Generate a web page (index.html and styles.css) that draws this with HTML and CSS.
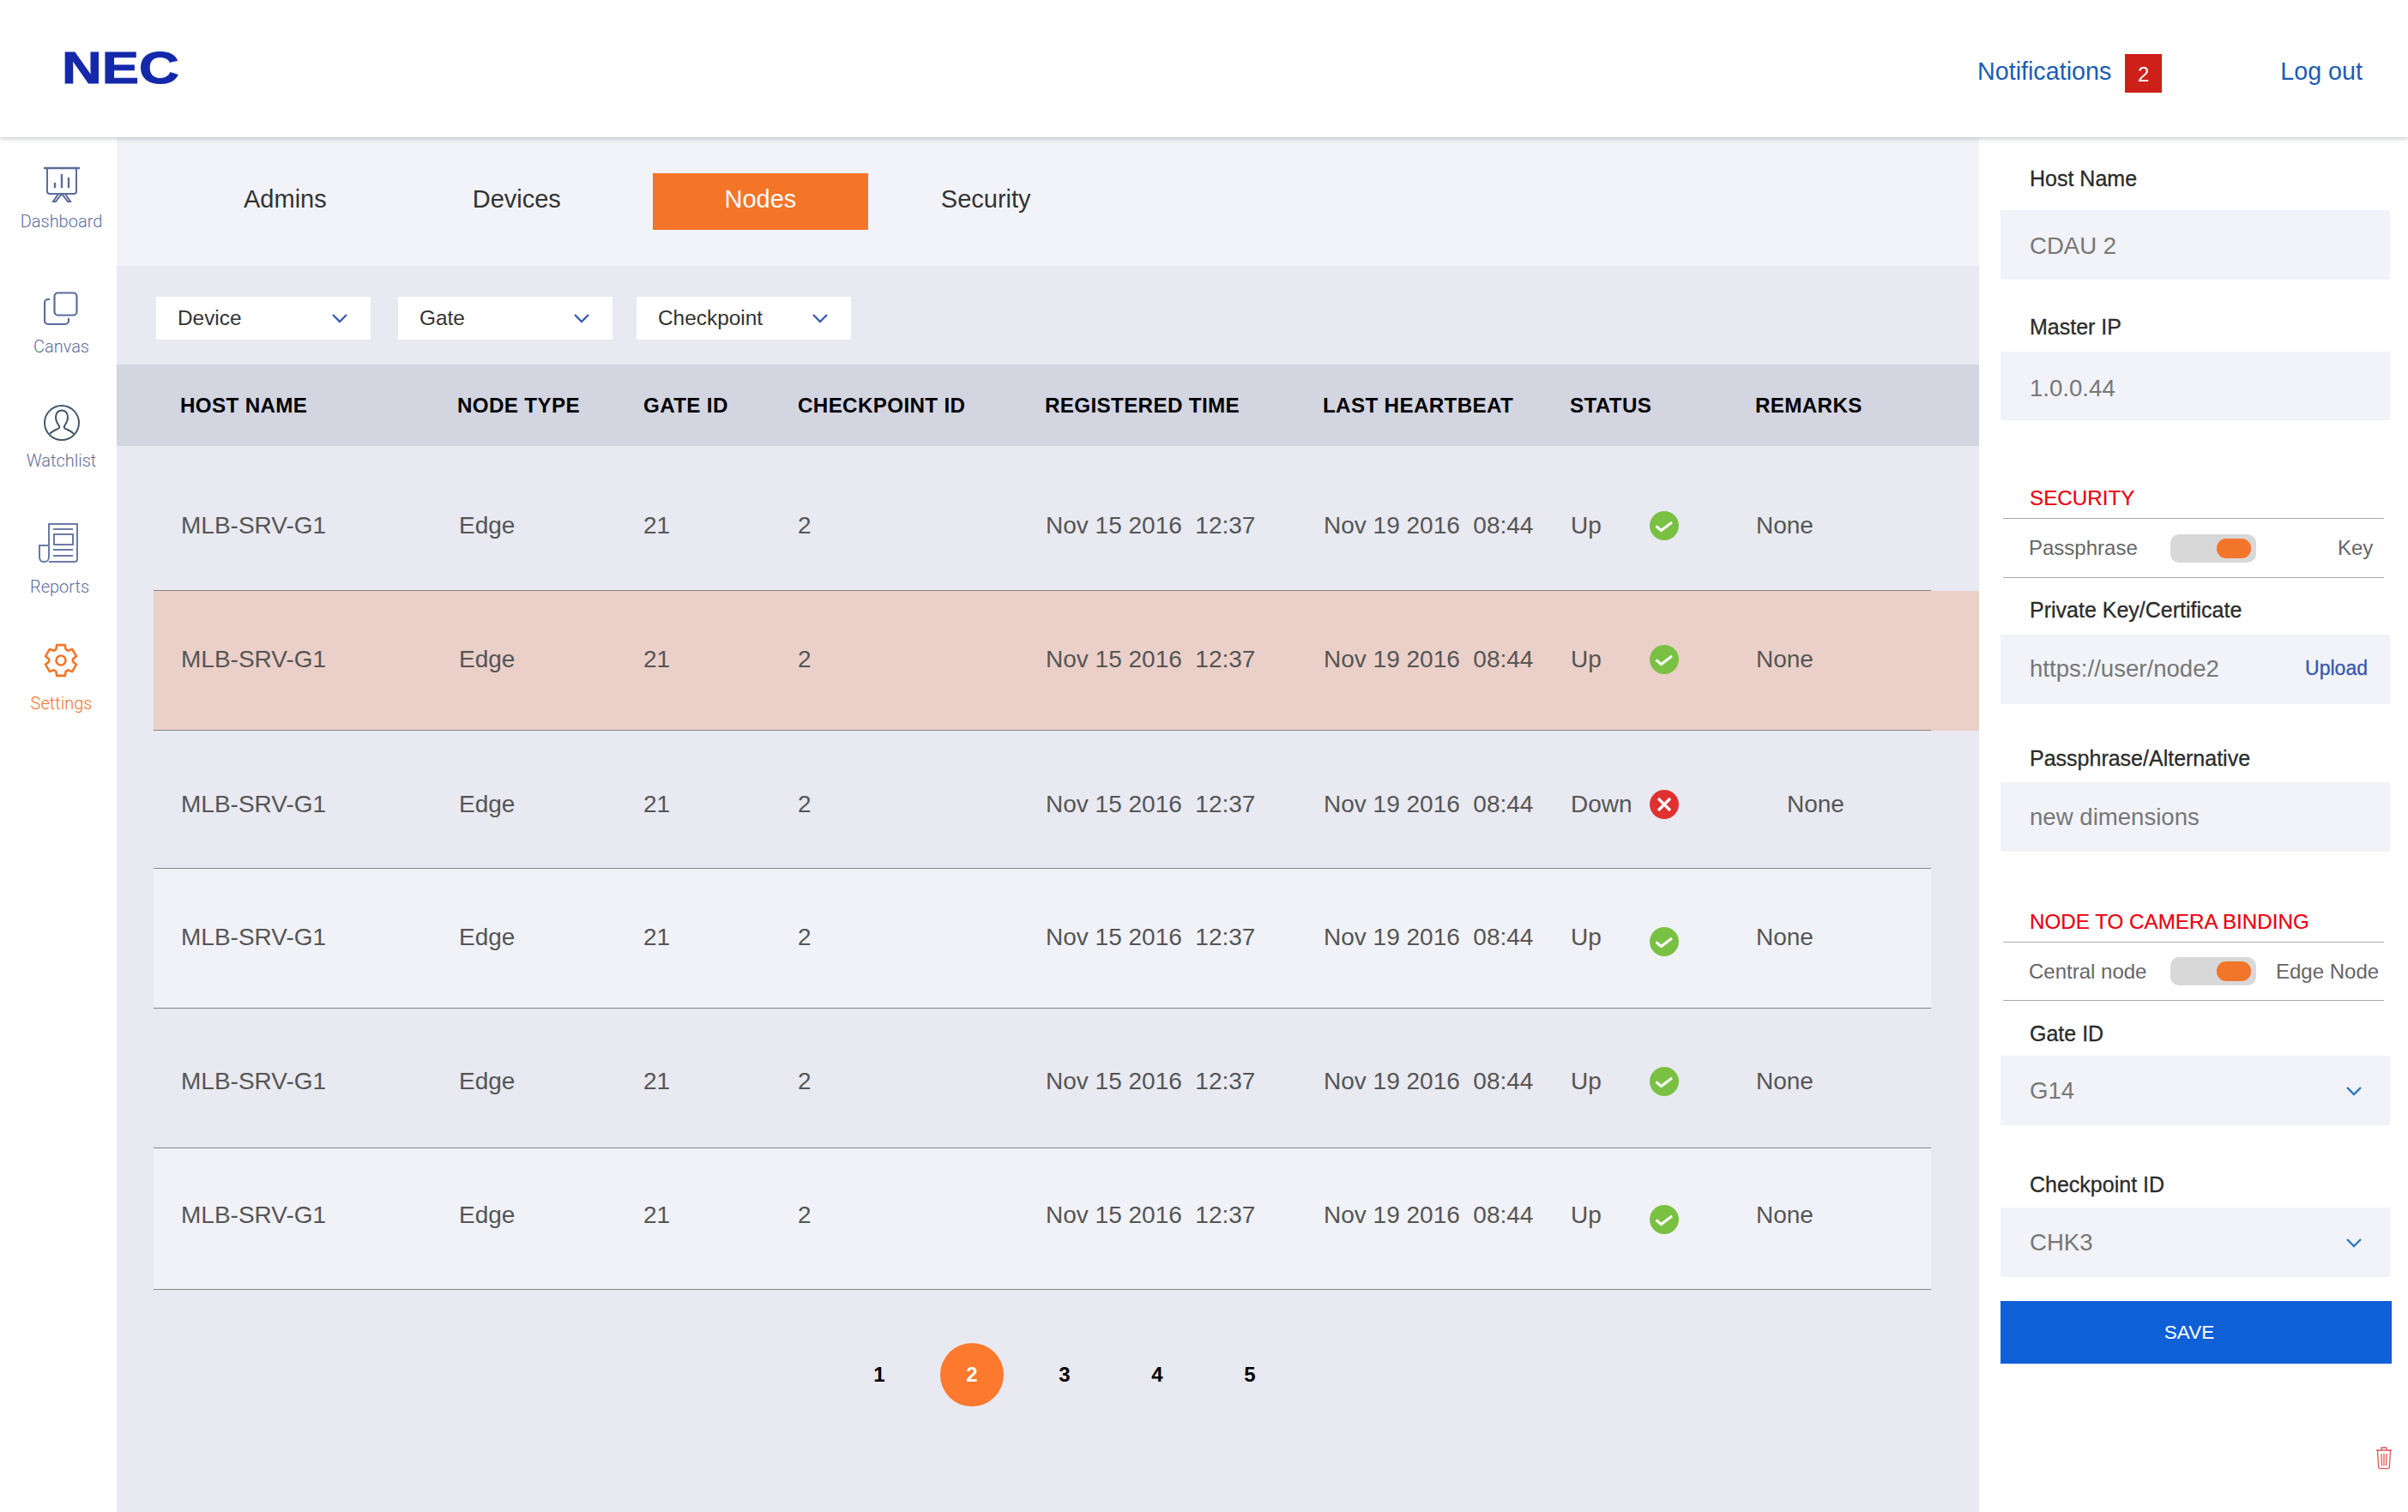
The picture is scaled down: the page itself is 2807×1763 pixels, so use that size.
FILE: index.html
```html
<!DOCTYPE html>
<html lang="en">
  <head>
    <meta charset="UTF-8" />
    <meta name="viewport" content="width=device-width, initial-scale=1.0" />
    <title>Nodes</title>
    <link rel="stylesheet" href="styles.css">
  </head>
  <body>
    <svg class="sprite" aria-hidden="true">
      <symbol id="icon-up" viewBox="0 0 34 34">
        <circle cx="17" cy="17" r="17" fill="#7ac143" />
        <path d="M7.5 17.5l6 5 12.5-9.5" fill="none" stroke="#fff" stroke-width="3" />
      </symbol>
      <symbol id="icon-down" viewBox="0 0 34 34">
        <circle cx="17" cy="17" r="17" fill="#e03131" />
        <path d="M10 10l14 14M24 10l-14 14" fill="none" stroke="#fff" stroke-width="3.2" />
      </symbol>
      <symbol id="icon-chevron" viewBox="0 0 18 12">
        <path d="M1 2l8 8 8-8" fill="none" stroke="currentColor" stroke-width="2.4" />
      </symbol>
    </svg>

    <header class="topbar">
      <span class="logo">NEC</span>
      <nav class="topbar-links">
        <a class="top-link">Notifications</a>
        <span class="badge">2</span>
        <a class="top-link logout">Log out</a>
      </nav>
    </header>

    <div class="app">
      <aside class="sidebar">
        <div class="nav-item nav-dashboard">
          <svg width="42" height="42" viewBox="0 0 42 42" fill="none" stroke="#5b6c9b" stroke-width="2">
            <path d="M0 2h42" stroke-width="2.5" />
            <path d="M4 2v27a3 3 0 0 0 3 3h28a3 3 0 0 0 3-3V2" />
            <path d="M13 19v6M21 9v16M29 13v12" stroke-width="2.4" />
            <path d="M17 32l-6 9h3l7-9 7 9h3l-6-9" />
          </svg>
          <span>Dashboard</span>
        </div>
        <div class="nav-item nav-canvas">
          <svg width="40" height="40" viewBox="0 0 40 40" fill="none" stroke="#5b6c9b" stroke-width="2.2">
            <rect x="12.5" y="1.5" width="26" height="26" rx="4" />
            <path d="M7 10H5a4 4 0 0 0-4 4v21a4 4 0 0 0 4 4h20a4 4 0 0 0 4-4v-3" transform="translate(0 -1)" />
          </svg>
          <span>Canvas</span>
        </div>
        <div class="nav-item nav-watchlist">
          <svg width="42" height="42" viewBox="0 0 42 42" fill="none" stroke="#44586a" stroke-width="2">
            <circle cx="21" cy="21" r="20" />
            <path d="M7 34c3-4 8-5 10.5-6.5 1-1 .5-3-.5-4.5-2-2.5-3-6-3-9 0-4.5 3-7.5 7-7.5s7 3 7 7.5c0 3-1 6.5-3 9-1 1.5-1.5 3.5-.5 4.5 2.5 1.5 7.5 2.5 10.5 6.5" />
          </svg>
          <span>Watchlist</span>
        </div>
        <div class="nav-item nav-reports">
          <svg width="46" height="46" viewBox="0 0 46 46" fill="none" stroke="#6b7aa8" stroke-width="2">
            <path d="M12 45h30a3 3 0 0 0 3-3V1H12v39a5 5 0 0 1-5 5 5 5 0 0 1-6-5V26h11" />
            <path d="M17 7h23M17 31h23M17 38h23" />
            <rect x="18" y="13" width="22" height="12" />
          </svg>
          <span>Reports</span>
        </div>
        <div class="nav-item nav-settings is-active">
          <svg width="40" height="40" viewBox="0 0 40 40" fill="none" stroke="#f47528" stroke-width="2.6" stroke-linejoin="round">
            <path d="M15.2 2.1L24.8 2.1L25.7 7.2L28.2 8.7L33.1 6.9L37.9 15.2L33.9 18.5L33.9 21.5L37.9 24.8L33.1 33.1L28.2 31.3L25.7 32.8L24.8 37.9L15.2 37.9L14.3 32.8L11.8 31.3L6.9 33.1L2.1 24.8L6.1 21.5L6.1 18.5L2.1 15.2L6.9 6.9L11.8 8.7L14.3 7.2Z" />
            <circle cx="20" cy="20" r="5.5" />
          </svg>
          <span>Settings</span>
        </div>
      </aside>

      <main class="content">
        <div class="tabs">
          <a class="tab">Admins</a>
          <a class="tab">Devices</a>
          <a class="tab tab-active">Nodes</a>
          <a class="tab">Security</a>
        </div>

        <div class="filters">
          <div class="filter">Device <svg class="chevron"><use href="#icon-chevron" /></svg></div>
          <div class="filter filter-gate">Gate <svg class="chevron"><use href="#icon-chevron" /></svg></div>
          <div class="filter filter-check">Checkpoint <svg class="chevron"><use href="#icon-chevron" /></svg></div>
        </div>

        <div class="table-head">
          <span>HOST NAME</span>
          <span>NODE TYPE</span>
          <span>GATE ID</span>
          <span>CHECKPOINT ID</span>
          <span>REGISTERED TIME</span>
          <span>LAST HEARTBEAT</span>
          <span>STATUS</span>
          <span>REMARKS</span>
        </div>

        <div class="row row-1">
          <div class="cells">
            <span>MLB-SRV-G1</span><span>Edge</span><span>21</span><span>2</span>
            <span>Nov 15 2016  12:37</span><span>Nov 19 2016  08:44</span>
            <span class="status"><span class="status-word">Up</span><svg class="status-icon"><use href="#icon-up" /></svg></span>
            <span>None</span>
          </div>
        </div>
        <div class="row row-2 row-alert">
          <div class="cells">
            <span>MLB-SRV-G1</span><span>Edge</span><span>21</span><span>2</span>
            <span>Nov 15 2016  12:37</span><span>Nov 19 2016  08:44</span>
            <span class="status"><span class="status-word">Up</span><svg class="status-icon"><use href="#icon-up" /></svg></span>
            <span>None</span>
          </div>
        </div>
        <div class="row row-3">
          <div class="cells">
            <span>MLB-SRV-G1</span><span>Edge</span><span>21</span><span>2</span>
            <span>Nov 15 2016  12:37</span><span>Nov 19 2016  08:44</span>
            <span class="status"><span class="status-word">Down</span><svg class="status-icon"><use href="#icon-down" /></svg></span>
            <span class="remark-shift">None</span>
          </div>
        </div>
        <div class="row row-4 row-light">
          <div class="cells">
            <span>MLB-SRV-G1</span><span>Edge</span><span>21</span><span>2</span>
            <span>Nov 15 2016  12:37</span><span>Nov 19 2016  08:44</span>
            <span class="status"><span class="status-word">Up</span><svg class="status-icon icon-low"><use href="#icon-up" /></svg></span>
            <span>None</span>
          </div>
        </div>
        <div class="row row-5">
          <div class="cells">
            <span>MLB-SRV-G1</span><span>Edge</span><span>21</span><span>2</span>
            <span>Nov 15 2016  12:37</span><span>Nov 19 2016  08:44</span>
            <span class="status"><span class="status-word">Up</span><svg class="status-icon"><use href="#icon-up" /></svg></span>
            <span>None</span>
          </div>
        </div>
        <div class="row row-6 row-light">
          <div class="cells">
            <span>MLB-SRV-G1</span><span>Edge</span><span>21</span><span>2</span>
            <span>Nov 15 2016  12:37</span><span>Nov 19 2016  08:44</span>
            <span class="status"><span class="status-word">Up</span><svg class="status-icon icon-low"><use href="#icon-up" /></svg></span>
            <span>None</span>
          </div>
        </div>

        <div class="pager">
          <a class="page">1</a>
          <a class="page"><span class="page-current">2</span></a>
          <a class="page">3</a>
          <a class="page">4</a>
          <a class="page">5</a>
        </div>
      </main>

      <aside class="panel">
        <label class="label label-first">Host Name</label>
        <div class="field field-host">CDAU 2</div>
        <label class="label label-master">Master IP</label>
        <div class="field field-master">1.0.0.44</div>

        <h2 class="section-title section-security">SECURITY</h2>
        <div class="switch-row">
          <span class="switch-left">Passphrase</span>
          <span class="switch"><span class="switch-knob"></span></span>
          <span class="switch-key">Key</span>
        </div>
        <label class="label label-key">Private Key/Certificate</label>
        <div class="field field-key field-between">https://user/node2 <a class="upload">Upload</a></div>
        <label class="label label-alt">Passphrase/Alternative</label>
        <div class="field">new dimensions</div>

        <h2 class="section-title section-binding">NODE TO CAMERA BINDING</h2>
        <div class="switch-row switch-row-short">
          <span class="switch-left">Central node</span>
          <span class="switch"><span class="switch-knob"></span></span>
          <span class="switch-edge">Edge Node</span>
        </div>
        <label class="label label-gate">Gate ID</label>
        <div class="field field-gate field-between">G14 <svg class="chevron chevron-field"><use href="#icon-chevron" /></svg></div>
        <label class="label label-check">Checkpoint ID</label>
        <div class="field field-check field-between">CHK3 <svg class="chevron chevron-field"><use href="#icon-chevron" /></svg></div>

        <button class="save">SAVE</button>

        <div class="trash-row">
          <svg width="20" height="26" viewBox="0 0 20 26" fill="none" stroke="#e25555" stroke-width="1.3">
            <path d="M1 4h18M7 4V1h6v3" />
            <path d="M2.5 4l1.2 20a1.5 1.5 0 0 0 1.5 1.3h9.600a1.5 1.5 0 0 0 1.5-1.3L17.5 4" />
            <path d="M7 8l.5 14M10 8v14M13 8l-.5 14" />
          </svg>
        </div>
      </aside>
    </div>
  </body>
</html>
```

FILE: styles.css
```css
* {
  box-sizing: border-box;
}
body {
  margin: 0;
  background-color: #fff;
  font-family: "Liberation Sans", Arial, sans-serif;
  color: #333;
  overflow: hidden;
}
.sprite {
  display: none;
}

/* top bar */
.topbar {
  position: relative;
  z-index: 2;
  height: 160px;
  background-color: #fff;
  box-shadow: 0 1px 6px rgba(60, 65, 90, 0.35);
  display: flex;
  justify-content: space-between;
  align-items: center;
}
.logo {
  margin-left: 72px;
  font-size: 51px;
  line-height: 50px;
  font-weight: bold;
  color: #1428aa;
  -webkit-text-stroke: 1px #1428aa;
  transform: scaleX(1.27);
  transform-origin: left center;
}
.topbar-links {
  display: flex;
  align-items: center;
  padding-right: 53px;
  margin-top: 10px;
}
.top-link {
  font-size: 28.7px;
  color: #1d5bb5;
  margin-top: -3px;
}
.logout {
  margin-left: 138px;
}
.badge {
  width: 43px;
  height: 45px;
  margin-left: 16px;
  padding-top: 3px;
  background-color: #cd2019;
  color: #fff;
  font-size: 24px;
  display: flex;
  align-items: center;
  justify-content: center;
}

.app {
  display: flex;
  height: 1603px;
}

/* left nav */
.sidebar {
  width: 136px;
  flex-shrink: 0;
  padding-top: 34px;
  padding-left: 7px;
  display: flex;
  flex-direction: column;
  align-items: center;
  background-color: #fff;
}
.nav-item {
  display: flex;
  flex-direction: column;
  align-items: center;
  font-family: Roboto, "Liberation Sans", sans-serif;
  font-weight: 300;
  font-size: 20px;
  line-height: 24px;
  color: #5d6d9c;
}
.nav-item svg {
  display: block;
}
.nav-dashboard span {
  margin-top: 10px;
}
.nav-canvas {
  margin-top: 70px;
}
.nav-canvas span {
  margin-top: 12px;
}
.nav-watchlist {
  margin-top: 56px;
}
.nav-watchlist span {
  margin-top: 11px;
}
.nav-reports {
  margin-top: 61px;
  margin-right: 4px;
}
.nav-reports svg {
  margin-right: 3px;
}
.nav-reports span {
  margin-top: 16px;
}
.nav-settings {
  margin-top: 54px;
}
.nav-settings span {
  margin-top: 18px;
}
.is-active {
  color: #f47528;
}

/* main column */
.content {
  width: 2171px;
  background-color: #e8e9f1;
}
.tabs {
  height: 150px;
  padding-left: 63px;
  background-color: #f2f3f8;
  display: flex;
  align-items: center;
}
.tab {
  padding: 0 85px 5px;
  font-size: 29px;
  color: #333;
}
.tab-active {
  width: 251px;
  height: 66px;
  margin-left: 22px;
  padding: 0 0 5px;
  background-color: #f47528;
  color: #fff;
  display: flex;
  align-items: center;
  justify-content: center;
}
.filters {
  height: 115px;
  padding-top: 36px;
  padding-left: 46px;
  display: flex;
  align-items: flex-start;
}
.filter {
  width: 250px;
  height: 50px;
  padding: 0 27px 1px 25px;
  background-color: #fff;
  font-size: 24.4px;
  color: #333;
  display: flex;
  align-items: center;
  justify-content: space-between;
}
.filter-gate {
  margin-left: 32px;
}
.filter-check {
  margin-left: 28px;
}
.chevron {
  width: 18px;
  height: 12px;
  color: #3a5cb5;
}
.chevron-field {
  color: #2a78c0;
  margin-right: 33px;
}

/* table */
.table-head {
  height: 95px;
  padding-left: 74px;
  background-color: #d3d5e1;
  display: grid;
  grid-template-columns: 323px 217px 180px 288px 324px 288px 216px auto;
  align-items: center;
  font-size: 24.2px;
  font-weight: bold;
  letter-spacing: 0.35px;
  color: #000;
}
.row {
  margin-left: 43px;
}
.cells {
  width: 2072px;
  height: 100%;
  padding-left: 32px;
  border-bottom: 1px solid #858585;
  display: grid;
  grid-template-columns: 324px 215px 180px 289px 324px 288px 216px auto;
  align-items: center;
  font-size: 28px;
  color: #555;
  white-space: pre;
}
.row-1 {
  height: 169px;
}
.row-1 .cells {
  padding-top: 18px;
}
.row-2 {
  height: 163px;
}
.row-2 .cells {
  padding-bottom: 3px;
}
.row-3 {
  height: 161px;
}
.row-3 .cells {
  padding-top: 12px;
}
.row-4 {
  height: 163px;
}
.row-4 .cells {
  padding-bottom: 2px;
}
.row-5 {
  height: 163px;
}
.row-5 .cells {
  padding-top: 8px;
}
.row-6 {
  height: 165px;
}
.row-6 .cells {
  padding-bottom: 8px;
}
.row-alert {
  background-color: #ebd0c9;
}
.row-light .cells {
  background-color: #f1f2f7;
}
.status {
  display: flex;
  align-items: center;
}
.status-word {
  width: 92px;
}
.status-icon {
  width: 34px;
  height: 34px;
}
.icon-low {
  margin-top: 9px;
}
.remark-shift {
  padding-left: 36px;
}

.pager {
  padding-top: 62px;
  padding-left: 835px;
  display: flex;
  align-items: center;
}
.page {
  width: 108px;
  height: 74px;
  font-size: 24px;
  font-weight: bold;
  color: #000;
  display: flex;
  align-items: center;
  justify-content: center;
}
.page-current {
  width: 74px;
  height: 74px;
  border-radius: 50%;
  background-color: #fd792d;
  color: #fff;
  display: flex;
  align-items: center;
  justify-content: center;
}

/* right panel */
.panel {
  width: 500px;
  padding: 33px 0 0 25px;
  background-color: #fff;
}
.label {
  display: block;
  height: 30px;
  padding-left: 34px;
  font-size: 25px;
  line-height: 30px;
  color: #2b2b2b;
  -webkit-text-stroke: 0.3px #2b2b2b;
}
.label-master {
  margin-top: 40px;
}
.label-key {
  margin-top: 22px;
}
.label-alt {
  margin-top: 48px;
}
.label-gate {
  margin-top: 23px;
}
.label-check {
  margin-top: 54px;
}
.field {
  width: 454px;
  height: 81px;
  margin-top: 13px;
  padding-left: 34px;
  background-color: #f2f3f8;
  font-size: 27.6px;
  color: #777;
  display: flex;
  align-items: center;
}
.field-host {
  margin-top: 22px;
  padding-top: 3px;
}
.field-master {
  height: 80px;
  margin-top: 14px;
  padding-top: 6px;
}
.field-key {
  margin-top: 14px;
  padding-bottom: 2px;
}
.field-gate {
  margin-top: 11px;
}
.field-check {
  margin-top: 12px;
}
.field-between {
  justify-content: space-between;
}
.upload {
  margin-right: 26px;
  font-size: 23px;
  color: #3558ad;
  -webkit-text-stroke: 0.3px #3558ad;
}
.section-title {
  height: 39px;
  margin: 0;
  padding-left: 34px;
  font-size: 24.2px;
  font-weight: normal;
  line-height: 32px;
  color: #e9000f;
  -webkit-text-stroke: 0.2px #e9000f;
}
.section-security {
  margin-top: 75px;
}
.section-binding {
  margin-top: 66px;
}
.switch-row {
  width: 444px;
  height: 70px;
  margin-left: 3px;
  border-top: 1px solid #aaa;
  border-bottom: 1px solid #aaa;
  display: flex;
  align-items: center;
  font-size: 24px;
  color: #666;
}
.switch-row-short {
  height: 69px;
}
.switch-left {
  width: 195px;
  padding-left: 30px;
  flex-shrink: 0;
}
.switch {
  width: 100px;
  height: 33px;
  padding: 5px 6px;
  border-radius: 10px;
  background-color: #d8d8d8;
  display: flex;
  justify-content: flex-end;
  flex-shrink: 0;
}
.switch-knob {
  width: 40px;
  height: 23px;
  border-radius: 11px;
  background-color: #f2752a;
}
.switch-key {
  margin-left: 95px;
}
.switch-edge {
  margin-left: 23px;
  white-space: nowrap;
}
.save {
  display: block;
  width: 456px;
  height: 73px;
  margin-top: 28px;
  padding: 0 16px 0 0;
  border: none;
  background-color: #0f5fd7;
  color: #fff;
  font-family: "Liberation Sans", Arial, sans-serif;
  font-size: 22.5px;
}
.trash-row {
  margin-top: 97px;
  padding-right: 18px;
  display: flex;
  justify-content: flex-end;
}
```
